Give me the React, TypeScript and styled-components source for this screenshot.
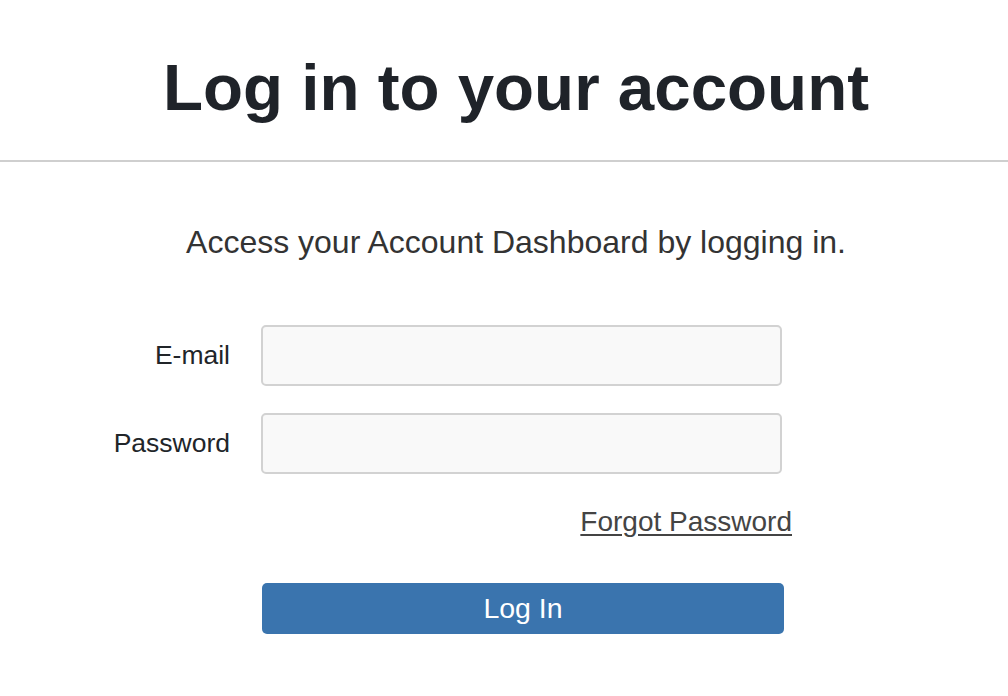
import React from 'react';
import styled, { createGlobalStyle } from 'styled-components';

const GlobalStyle = createGlobalStyle`
    body {
        margin: 0;
        background: #ffffff;
        font-family: "Liberation Sans", Arial, Helvetica, sans-serif;
    }
`;

const Page = styled.div`
    width: 1008px;
    min-height: 696px;
    background: #ffffff;
`;

const Header = styled.header`
    padding: 55px 0 39px 24px;
    border-bottom: 2px solid #cfcfcf;
`;

const Title = styled.h1`
    margin: 0;
    text-align: center;
    font-size: 65.5px;
    line-height: 1;
    font-weight: 700;
    color: #1f2329;
`;

const Content = styled.main`
    padding: 64px 0 0 24px;
`;

const Intro = styled.p`
    margin: 0;
    text-align: center;
    font-size: 32px;
    line-height: 1;
    color: #333333;
`;

const Form = styled.form`
    display: grid;
    grid-template-columns: 126px 521px;
    column-gap: 31px;
    row-gap: 27px;
    align-items: center;
    width: 678px;
    margin: 67px 0 0 80px;
`;

const Label = styled.label`
    text-align: right;
    font-size: 26.5px;
    color: #212529;
`;

const Input = styled.input`
    box-sizing: border-box;
    width: 521px;
    height: 61px;
    border: 2px solid #d2d2d2;
    border-radius: 5px;
    background: #f9f9f9;
    padding: 0 14px;
    font-size: 24px;
    font-family: inherit;
    outline: none;
`;

const LinkRow = styled.div`
    grid-column: 2;
    display: flex;
    justify-content: flex-end;
    margin-right: -10px;
    margin-top: 5px;
`;

const ForgotLink = styled.a`
    font-size: 28px;
    color: #444444;
    text-decoration: underline;
    text-underline-offset: 3px;
    cursor: pointer;
`;

const SubmitButton = styled.button`
    grid-column: 2;
    box-sizing: border-box;
    width: 522px;
    height: 51px;
    margin-top: 18px;
    margin-left: 1px;
    border: none;
    border-radius: 5px;
    background: #3a74ae;
    color: #ffffff;
    font-family: inherit;
    font-size: 28.5px;
    cursor: pointer;
`;

const App = () => {
    return (
        <Page>
            <GlobalStyle />
            <Header>
                <Title>Log in to your account</Title>
            </Header>
            <Content>
                <Intro>Access your Account Dashboard by logging in.</Intro>
                <Form onSubmit={e => e.preventDefault()}>
                    <Label htmlFor="email">E-mail</Label>
                    <Input id="email" type="email" />
                    <Label htmlFor="password">Password</Label>
                    <Input id="password" type="password" />
                    <LinkRow>
                        <ForgotLink>Forgot Password</ForgotLink>
                    </LinkRow>
                    <SubmitButton type="submit">Log In</SubmitButton>
                </Form>
            </Content>
        </Page>
    );
};

export default App;
